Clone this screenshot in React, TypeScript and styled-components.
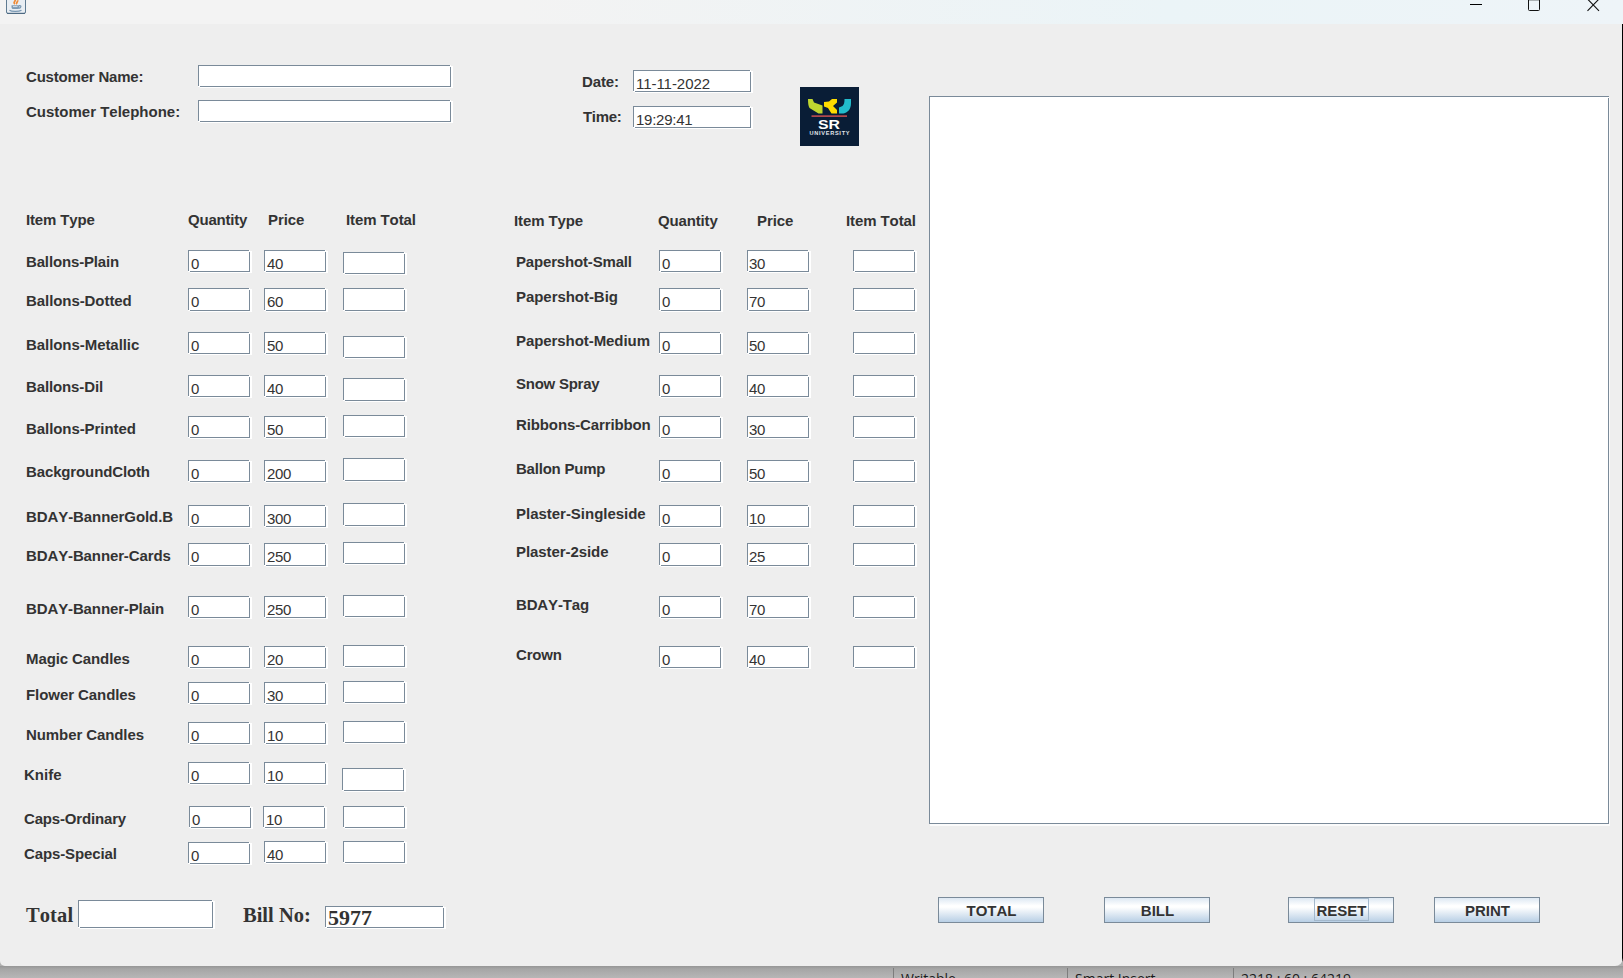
import React from 'react';
import styled, { createGlobalStyle } from 'styled-components';

const line = '#7a8a99';
const ink = '#333333';

const GlobalStyle = createGlobalStyle`
  * { box-sizing: border-box; }
  body {
    margin: 0;
    background: #eeeeee;
    font-family: "Liberation Sans", Arial, sans-serif;
    overflow: hidden;
  }
`;

const Desktop = styled.div`
  display: flex;
  flex-direction: column;
  width: 1623px;
  height: 978px;
  background: #b0b0b0;
  overflow: hidden;
`;

const Frame = styled.div`
  display: flex;
  flex-direction: column;
  height: 966px;
  flex: none;
  background: #eeeeee;
  border-radius: 0 0 8px 5px;
  overflow: hidden;
`;

const TitleBar = styled.header`
  display: flex;
  justify-content: space-between;
  height: 24px;
  flex: none;
  padding: 0 23px 0 6px;
  background: linear-gradient(90deg, #f3f3f3 0%, #f3f3f3 32%, #ebf4f7 72%, #eef4f8 100%);
`;

const WindowControls = styled.div`
  display: flex;
  gap: 46px;
`;

const Content = styled.main`
  display: flex;
  height: 942px;
  border-right: 1px solid #000;
`;

const Form = styled.section`
  display: flex;
  flex-direction: column;
  width: 929px;
  flex: none;
`;

const Side = styled.section`
  display: flex;
  flex-direction: column;
  width: 693px;
  padding-top: 72px;
`;

const Field = styled.span<{ $w?: number; $h?: number; $top?: number; $left?: number; $pad?: number; $track?: number }>`
  display: block;
  width: ${p => p.$w ?? 62}px;
  height: ${p => p.$h ?? 22}px;
  margin-top: ${p => p.$top ?? 0}px;
  margin-left: ${p => p.$left ?? 0}px;
  padding: 4px 0 0 ${p => p.$pad ?? 3}px;
  flex: none;
  font-size: 15px;
  line-height: 20px;
  letter-spacing: ${p => p.$track ?? -0.3}px;
  color: ${ink};
  white-space: nowrap;
  background:
    linear-gradient(${line}, ${line}) 0 0 / calc(100% - 1px) 1px no-repeat,
    linear-gradient(${line}, ${line}) 0 0 / 1px calc(100% - 1px) no-repeat,
    linear-gradient(${line}, ${line}) 100% 100% / 1px calc(100% - 2px) no-repeat,
    linear-gradient(${line}, ${line}) 100% 100% / calc(100% - 2px) 1px no-repeat,
    #ffffff;
  box-shadow: 2px 1px 0 #ffffff;
`;

const BillField = styled(Field)`
  padding-top: 1px;
  font: bold 22px/22px "Liberation Serif", "Times New Roman", serif;
  letter-spacing: 0;
`;

const Label = styled.span<{ $top?: number; $left?: number; $w?: number; $track?: number }>`
  display: block;
  width: ${p => (p.$w ? `${p.$w}px` : 'auto')};
  height: 20px;
  margin-top: ${p => p.$top ?? 0}px;
  margin-left: ${p => p.$left ?? 0}px;
  flex: none;
  font-size: 15px;
  font-weight: bold;
  line-height: 20px;
  font-kerning: none;
  letter-spacing: ${p => p.$track ?? 0}px;
  color: ${ink};
  white-space: nowrap;
`;

const SerifLabel = styled(Label)`
  font-family: "Liberation Serif", "Times New Roman", serif;
  font-size: 20.5px;
`;

const TopArea = styled.div`
  display: flex;
  height: 186px;
  flex: none;
  padding-left: 26px;
`;

const FieldStack = styled.div<{ $w: number; $top: number }>`
  display: flex;
  flex-direction: column;
  width: ${p => p.$w}px;
  padding-top: ${p => p.$top}px;
`;

const FieldRow = styled.div<{ $h: number }>`
  display: flex;
  height: ${p => p.$h}px;
`;

const LogoBox = styled.div`
  margin-top: 63px;
  height: 59px;
`;

const Tables = styled.div`
  display: flex;
  height: 664px;
  flex: none;
  padding-left: 26px;
`;

const Table = styled.div<{ $w: number; $cols: string }>`
  width: ${p => p.$w}px;
  flex: none;
  --cols: ${p => p.$cols};
`;

const HeadRow = styled.div<{ $top: number }>`
  display: flex;
  height: 35px;
  padding-top: ${p => p.$top}px;
`;

const ItemRow = styled.div<{ $h: number }>`
  display: grid;
  grid-template-columns: var(--cols);
  align-items: start;
  height: ${p => p.$h}px;
`;

const Totals = styled.footer`
  display: flex;
  padding: 26px 0 0 26px;
`;

const BillArea = styled.div`
  width: 680px;
  height: 728px;
  flex: none;
  background:
    linear-gradient(${line}, ${line}) 0 0 / 100% 1px no-repeat,
    linear-gradient(${line}, ${line}) 0 0 / 1px 100% no-repeat,
    linear-gradient(${line}, ${line}) 100% 100% / 1px calc(100% - 2px) no-repeat,
    linear-gradient(${line}, ${line}) 100% 100% / calc(100% - 1px) 1px no-repeat,
    #ffffff;
  box-shadow: 1px 2px 0 #fbfbfb;
`;

const Actions = styled.div`
  display: flex;
  padding: 73px 0 0 9px;
`;

const Button = styled.button<{ $gap?: number }>`
  display: flex;
  align-items: flex-start;
  justify-content: center;
  width: 106px;
  height: 26px;
  margin: 0 ${p => p.$gap ?? 0}px 0 0;
  padding: 0 0 0 1px;
  flex: none;
  border: 1px solid ${line};
  background: linear-gradient(180deg, #dde8f3 0%, #ffffff 32%, #ffffff 38%, #b8cfe5 100%);
  font: bold 15px/22px "Liberation Sans", Arial, sans-serif;
  font-kerning: none;
  color: ${ink};
`;

const Caption = styled.span<{ $focus?: boolean }>`
  height: 23px;
  padding: 1px 1px 0;
  border: 1px solid ${p => (p.$focus ? '#a3b8cc' : 'transparent')};
  line-height: 22px;
`;

const StatusBar = styled.div`
  display: flex;
  height: 12px;
  padding-left: 893px;
  background: linear-gradient(180deg, #969696 0, #a6a6a6 3px, #b6b6b6 12px);
  overflow: hidden;
`;

const StatusCell = styled.span<{ $w: number }>`
  width: ${p => p.$w}px;
  flex: none;
  margin-top: 2px;
  padding: 4px 0 0 7px;
  border-left: 1px solid #7d7d7d;
  font-family: "Open Sans", sans-serif;
  font-size: 14px;
  line-height: 14px;
  color: #1c1c1c;
  white-space: nowrap;
`;

type Item = {
  name: string;
  price: number;
  pitch: number;
  label: number;
  total: number;
  track: number;
  h?: number;
  totalH?: number;
  labelX?: number;
  qtyX?: number;
  priceX?: number;
  totalX?: number;
  priceTop?: number;
};

const leftItems: Item[] = [
  { name: 'Ballons-Plain', price: 40, pitch: 38, label: 7, total: 7, track: -0.15 },
  { name: 'Ballons-Dotted', price: 60, pitch: 44, label: 8, total: 5, track: -0.07, h: 23, totalH: 23 },
  { name: 'Ballons-Metallic', price: 50, pitch: 43, label: 8, total: 9, track: -0.06 },
  { name: 'Ballons-Dil', price: 40, pitch: 41, label: 7, total: 8, track: -0.12, totalH: 23 },
  { name: 'Ballons-Printed', price: 50, pitch: 44, label: 8, total: 4, track: -0.07 },
  { name: 'BackgroundCloth', price: 200, pitch: 45, label: 7, total: 3, track: -0.13, totalH: 23 },
  { name: 'BDAY-BannerGold.B', price: 300, pitch: 38, label: 7, total: 3, track: -0.08, totalH: 23 },
  { name: 'BDAY-Banner-Cards', price: 250, pitch: 53, label: 8, total: 4, track: -0.12, h: 23 },
  { name: 'BDAY-Banner-Plain', price: 250, pitch: 50, label: 8, total: 4, track: -0.12 },
  { name: 'Magic Candles', price: 20, pitch: 36, label: 8, total: 4, track: -0.1 },
  { name: 'Flower Candles', price: 30, pitch: 40, label: 8, total: 4, track: -0.07 },
  { name: 'Number Candles', price: 10, pitch: 40, label: 8, total: 4, track: -0.09 },
  { name: 'Knife', price: 10, pitch: 44, label: 8, total: 11, track: 0, totalH: 23, labelX: -2, totalX: -1 },
  { name: 'Caps-Ordinary', price: 10, pitch: 36, label: 8, total: 5, track: -0.17, labelX: -2, qtyX: 1, priceX: -1 },
  { name: 'Caps-Special', price: 40, pitch: 30, label: 7, total: 4, track: -0.11, labelX: -2, priceTop: 4 },
];

const rightItems: Item[] = [
  { name: 'Papershot-Small', price: 30, pitch: 38, label: 7, total: 5, track: -0.17 },
  { name: 'Papershot-Big', price: 70, pitch: 44, label: 4, total: 5, track: -0.05, h: 23, totalH: 23 },
  { name: 'Papershot-Medium', price: 50, pitch: 43, label: 4, total: 5, track: -0.07 },
  { name: 'Snow Spray', price: 40, pitch: 41, label: 4, total: 5, track: -0.25 },
  { name: 'Ribbons-Carribbon', price: 30, pitch: 44, label: 4, total: 5, track: -0.12 },
  { name: 'Ballon Pump', price: 50, pitch: 45, label: 4, total: 5, track: -0.22 },
  { name: 'Plaster-Singleside', price: 10, pitch: 38, label: 4, total: 5, track: -0.02 },
  { name: 'Plaster-2side', price: 25, pitch: 53, label: 4, total: 5, track: -0.07, h: 23, totalH: 23 },
  { name: 'BDAY-Tag', price: 70, pitch: 50, label: 4, total: 5, track: -0.15 },
  { name: 'Crown', price: 40, pitch: 36, label: 4, total: 5, track: -0.2 },
];

function ItemRows({ items, pricePad }: { items: Item[]; pricePad: number }) {
  return (
    <>
      {items.map(it => (
        <ItemRow key={it.name} $h={it.pitch}>
          <Label $top={it.label} $left={it.labelX} $track={it.track}>{it.name}</Label>
          <Field $top={5} $h={it.h} $left={it.qtyX}>0</Field>
          <Field $top={it.priceTop ?? 5} $h={it.h} $left={it.priceX} $pad={pricePad}>{it.price}</Field>
          <Field $top={it.total} $h={it.totalH} $left={it.totalX} />
        </ItemRow>
      ))}
    </>
  );
}

const JavaIcon = () => (
  <svg width="20" height="14" viewBox="0 0 20 14">
    <rect x="0.5" y="-6" width="19" height="19.5" rx="1.5" fill="#e9eef3" stroke="#5f7b92" />
    <path d="M1 13.3H19" stroke="#496780" />
    <path d="M9 4C6.500 2.500 10 1.200 9.300 -1M11 4.200C9.600 2.700 12 2.200 11.600 .3" fill="none" stroke="#ee8a35" strokeWidth="1.7" />
    <path d="M5.500 5.300h7.800v2c0 1.400-1 1.800-2.200 1.800H7.700c-1.200 0-2.200-.4-2.200-1.800z" fill="#7f9bb4" />
    <path d="M13 5.700c2.600-.5 2.600 2.100-.4 2.600M3.500 10.200c2 1.600 9.500 1.500 12 0" fill="none" stroke="#7897b2" strokeWidth="1.200" />
    <path d="M7 6.600h4.500" stroke="#d3dee8" />
  </svg>
);

const Logo = () => (
  <svg width="59" height="59" viewBox="0 0 59 59">
    <rect width="59" height="59" fill="#091d36" />
    <path d="M8 12h4.500l1.500 3.500 8.500 3V26.500h-4L9.500 21C8.300 19 8 16 8 12z" fill="#bfd630" />
    <path d="M24 15l5-.5 3-2.500h5v3.500l-4 3.500 4 4v3.500h-5.500l-3.500-5.500-4-1.500z" fill="#ffdc00" />
    <path d="M44.500 12H51v4c0 6-3 9.500-7.500 10.500H39v-6l3.500-1.500c1.500-1.500 2-3 2-7z" fill="#22bdcd" />
    <path d="M11.500 29.200h35.500" stroke="#b0484c" strokeWidth="1.7" />
    <text x="18" y="42.200" fill="#fff" fontFamily="Liberation Sans, Arial, sans-serif" fontSize="12.500" fontWeight="bold" textLength="22" lengthAdjust="spacingAndGlyphs">SR</text>
    <text x="9.500" y="48.200" fill="#e2e5ea" fontFamily="Liberation Sans, Arial, sans-serif" fontSize="5.600" fontWeight="bold" textLength="40" lengthAdjust="spacing">UNIVERSITY</text>
  </svg>
);

export default function App() {
  return (
    <Desktop>
      <GlobalStyle />
      <Frame>
        <TitleBar>
          <JavaIcon />
          <WindowControls>
            <svg width="13" height="12" viewBox="0 0 13 12"><path d="M1 4.500h12" stroke="#000" /></svg>
            <svg width="13" height="12" viewBox="0 0 13 12"><path d="M0.500 -2V9.500q0 1 1 1H10.500q1 0 1 -1V-2" fill="none" stroke="#111" /><path d="M1 0.500h10" stroke="#aab0b2" /></svg>
            <svg width="13" height="12" viewBox="0 0 13 12"><path d="M0.500 -1 12 10.800M12 -1 0.500 10.800" stroke="#111" strokeWidth="1.100" /></svg>
          </WindowControls>
        </TitleBar>
        <Content>
          <Form>
            <TopArea>
              <FieldStack $w={556} $top={41}>
                <FieldRow $h={35}>
                  <Label $top={2} $w={172} $track={-0.2}>Customer Name:</Label>
                  <Field $w={253} />
                </FieldRow>
                <FieldRow $h={35}>
                  <Label $top={2} $w={172}>Customer Telephone:</Label>
                  <Field $w={253} />
                </FieldRow>
              </FieldStack>
              <FieldStack $w={218} $top={46}>
                <FieldRow $h={36}>
                  <Label $top={2} $w={51} $track={-0.1}>Date:</Label>
                  <Field $w={118} $track={-0.05}>11-11-2022</Field>
                </FieldRow>
                <FieldRow $h={36}>
                  <Label $top={1} $left={1} $w={50} $track={-0.3}>Time:</Label>
                  <Field $w={118} $track={-0.25}>19:29:41</Field>
                </FieldRow>
              </FieldStack>
              <LogoBox><Logo /></LogoBox>
            </TopArea>
            <Tables>
              <Table $w={490} $cols="162px 76px 79px 62px">
                <HeadRow $top={0}>
                  <Label $w={162} $track={-0.15}>Item Type</Label>
                  <Label $w={80} $track={-0.2}>Quantity</Label>
                  <Label $w={78} $track={-0.1}>Price</Label>
                  <Label $track={-0.1}>Item Total</Label>
                </HeadRow>
                <ItemRows items={leftItems} pricePad={3} />
              </Table>
              <Table $w={400} $cols="143px 88px 106px 62px">
                <HeadRow $top={1}>
                  <Label $left={-2} $w={144} $track={-0.12}>Item Type</Label>
                  <Label $w={99} $track={-0.15}>Quantity</Label>
                  <Label $w={89} $track={-0.1}>Price</Label>
                  <Label $track={-0.1}>Item Total</Label>
                </HeadRow>
                <ItemRows items={rightItems} pricePad={2} />
              </Table>
            </Tables>
            <Totals>
              <SerifLabel $top={5} $w={52} $track={0.1}>Total</SerifLabel>
              <Field $w={135} $h={28} />
              <SerifLabel $top={5} $left={30} $w={82}>Bill No:</SerifLabel>
              <BillField $w={119} $top={6}>5977</BillField>
            </Totals>
          </Form>
          <Side>
            <BillArea />
            <Actions>
              <Button $gap={60}><Caption>TOTAL</Caption></Button>
              <Button $gap={78}><Caption>BILL</Caption></Button>
              <Button $gap={40}><Caption $focus>RESET</Caption></Button>
              <Button><Caption>PRINT</Caption></Button>
            </Actions>
          </Side>
        </Content>
      </Frame>
      <StatusBar>
        <StatusCell $w={174}>Writable</StatusCell>
        <StatusCell $w={166}>Smart Insert</StatusCell>
        <StatusCell $w={200}>2218 : 60 : 64219</StatusCell>
      </StatusBar>
    </Desktop>
  );
}
